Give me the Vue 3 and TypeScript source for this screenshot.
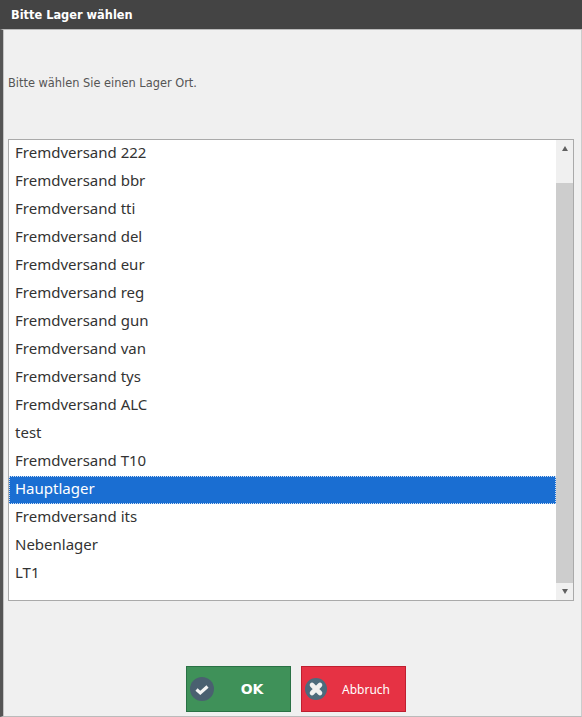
<script setup lang="ts">
const items: string[] = [
  'Fremdversand 222', 'Fremdversand bbr', 'Fremdversand tti', 'Fremdversand del',
  'Fremdversand eur', 'Fremdversand reg', 'Fremdversand gun', 'Fremdversand van',
  'Fremdversand tys', 'Fremdversand ALC', 'test', 'Fremdversand T10',
  'Hauptlager', 'Fremdversand its', 'Nebenlager', 'LT1',
]
const selected = 'Hauptlager'
</script>

<template>
  <div class="win">
    <header class="title">Bitte Lager wählen</header>
    <main class="body">
      <p class="desc">Bitte wählen Sie einen Lager Ort.</p>
      <div class="listbox">
        <ul class="list">
          <li v-for="it in items" :key="it" class="row" :class="{ sel: it === selected }">{{ it }}</li>
        </ul>
        <div class="sb">
          <div class="arrow"><span class="tri up"></span></div>
          <div class="track"></div>
          <div class="arrow"><span class="tri down"></span></div>
        </div>
      </div>
      <div class="actions">
        <button class="btn ok">
          <span class="ico">
            <svg width="24" height="24" viewBox="0 0 24 24"><circle cx="12" cy="12" r="12" fill="#4a6070"/><path d="M6.5 12.5l3.8 3.4 7.2-6.4" fill="none" stroke="#f4f4f4" stroke-width="3.2"/></svg>
          </span>
          <span class="lbl">OK</span>
        </button>
        <button class="btn cancel">
          <span class="ico small">
            <svg width="22" height="22" viewBox="0 0 22 22"><circle cx="11" cy="11" r="11" fill="#4d6b7c"/><path d="M7 7l8 8M15 7l-8 8" fill="none" stroke="#f0f0f0" stroke-width="4.6" stroke-linecap="round"/></svg>
          </span>
          <span class="lbl">Abbruch</span>
        </button>
      </div>
    </main>
  </div>
</template>

<style>
html, body { margin: 0; padding: 0; background: #f0f0f0; }
</style>

<style scoped>
.win {
  width: 582px;
  height: 717px;
  display: flex;
  flex-direction: column;
  box-sizing: border-box;
  overflow: hidden;
  background: #f0f0f0;
}
.title {
  height: 29px;
  flex: none;
  box-sizing: border-box;
  background: #444444;
  color: #fff;
  font: bold 11.4px/30px "DejaVu Sans", sans-serif;
  padding-left: 11px;
}
.body {
  flex: 1;
  min-height: 0;
  display: flex;
  flex-direction: column;
  border-left: 3px solid #555;
  border-right: 1px solid #ccc;
  border-top: 1px solid #bbb;
  border-bottom: 1px solid #bbb;
  box-shadow: inset 1px 0 0 #c4c4c4;
  padding: 0 7px 0 5px;
}
.desc {
  margin: 0;
  padding-top: 46px;
  height: 63px;
  font: 11.4px/14px "DejaVu Sans", sans-serif;
  color: #555;
}
.listbox {
  display: flex;
  height: 462px;
  box-sizing: border-box;
  border: 1px solid #aaa;
  background: #fff;
}
.list {
  flex: 1;
  margin: 0;
  padding: 0;
  list-style: none;
}
.row {
  height: 28px;
  padding-left: 6px;
  font: 15px/25px "Noto Sans", sans-serif;
  color: #333;
  box-sizing: border-box;
}
.row.sel {
  background: #1a6ed2;
  color: #fff;
  outline: 1px dotted #cfe0f5;
  outline-offset: -1px;
}
.sb {
  width: 17px;
  flex: none;
  display: flex;
  flex-direction: column;
  background: #f0f0f0;
}
.arrow {
  height: 17px;
  display: flex;
  align-items: center;
  justify-content: center;
  flex: none;
}
.track { flex: 1; background: #cdcdcd; margin-top: 26px; }
.tri { width: 0; height: 0; border-left: 3.5px solid transparent; border-right: 3.5px solid transparent; }
.tri.up { border-bottom: 5px solid #606060; }
.tri.down { border-top: 5px solid #606060; }
.actions {
  display: flex;
  justify-content: center;
  gap: 10px;
  margin-top: 65px;
  padding-left: 10px;
}
.btn {
  width: 105px;
  height: 46px;
  box-sizing: border-box;
  display: flex;
  align-items: center;
  padding: 0 0 0 3px;
  color: #fff;
  cursor: pointer;
}
.ok { background: #3f9159; border: 1px solid #2a7145; }
.cancel { background: #e63244; border: 1px solid #bf1f30; }
.ico { width: 24px; height: 24px; display: block; flex: none; }
.ico.small { width: 22px; height: 22px; }
.ico svg { display: block; }
.lbl { flex: 1; text-align: center; }
.ok .lbl { font: bold 14px "DejaVu Sans", sans-serif; }
.cancel .lbl { font: 12px "Noto Sans", sans-serif; }
</style>
